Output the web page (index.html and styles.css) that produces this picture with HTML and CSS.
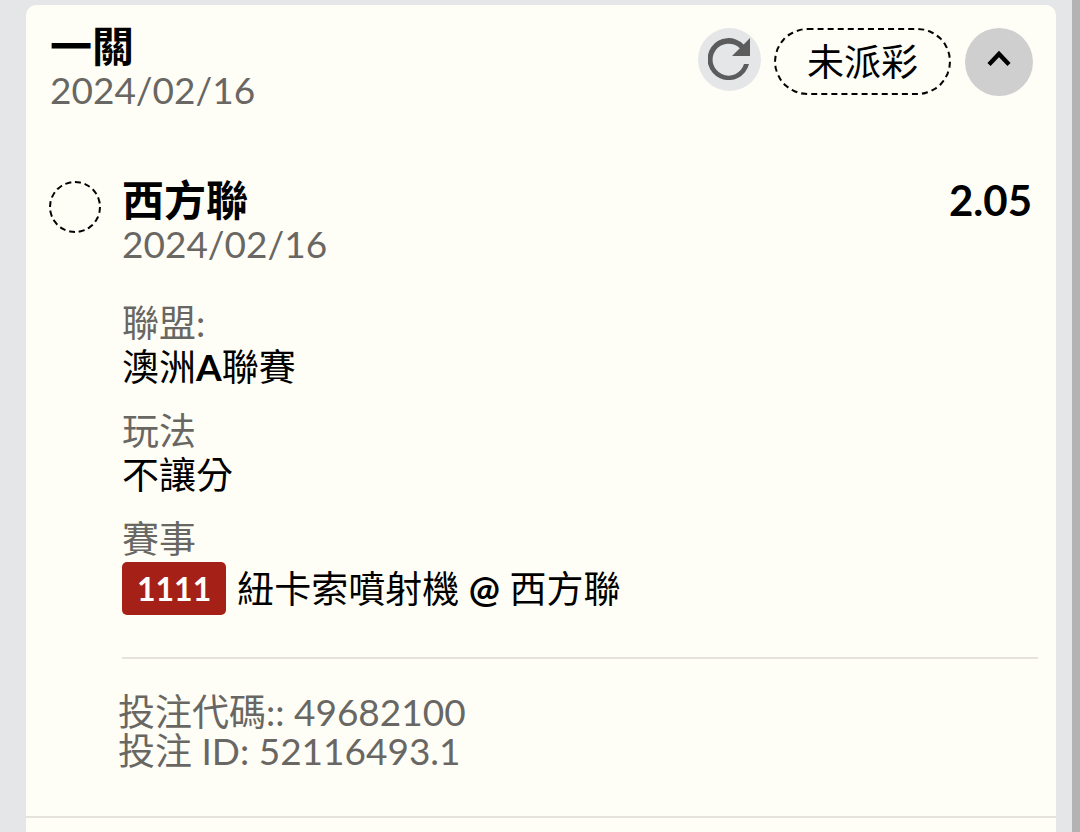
FILE: index.html
```html
<!DOCTYPE html>
<html lang="zh-Hant">
<head>
<meta charset="utf-8">
<meta name="viewport" content="width=device-width, initial-scale=1">
<title>一關</title>
<link rel="stylesheet" href="styles.css">
</head>
<body>
<main class="page">
  <article class="card">
    <section class="bet">
      <header class="bet-header">
        <div class="bet-heading">
          <h1 class="title">一關</h1>
          <time class="date" datetime="2024-02-16">2024/02/16</time>
        </div>
        <div class="actions">
          <button class="refresh" type="button" aria-label="重新整理">
            <svg class="refresh-icon" viewBox="0 0 42 42" aria-hidden="true">
              <path d="M35.6 6.4 42 0V18H24l7.8-7.8A16 16 0 1 0 36 26h5A21 21 0 1 1 35.6 6.4Z" fill="#5c5c5c"/>
            </svg>
          </button>
          <span class="status">未派彩</span>
          <button class="toggle" type="button" aria-label="收合" aria-expanded="true">
            <svg class="toggle-icon" viewBox="0 0 26 18" aria-hidden="true">
              <path d="M3 14.5 13 4l10 10.5" fill="none" stroke="#000" stroke-width="4.4"/>
            </svg>
          </button>
        </div>
      </header>

      <div class="leg">
        <span class="leg-mark"></span>
        <div class="leg-body">
          <div class="leg-header">
            <div class="leg-heading">
              <h2 class="title">西方聯</h2>
              <time class="date" datetime="2024-02-16">2024/02/16</time>
            </div>
            <span class="odds">2.05</span>
          </div>
          <dl class="details">
            <div class="detail">
              <dt>聯盟:</dt>
              <dd>澳洲<b>A</b>聯賽</dd>
            </div>
            <div class="detail">
              <dt>玩法</dt>
              <dd>不讓分</dd>
            </div>
            <div class="detail">
              <dt>賽事</dt>
              <dd class="match"><span class="code">1111</span><span>紐卡索噴射機 <b>@</b> 西方聯</span></dd>
            </div>
          </dl>
        </div>
      </div>

      <footer class="reference">
        <p>投注代碼:: 49682100</p>
        <p>投注 ID: 52116493.1</p>
      </footer>
    </section>
  </article>
</main>
</body>
</html>
```
FILE: styles.css
```css
* {
  box-sizing: border-box;
}

body {
  margin: 0;
  background: #e4e6e8;
  color: #000;
  font-family: Lato, "Noto Sans CJK TC", sans-serif;
  font-size: 37px;
  line-height: 44px;
}

h1, h2, p, dl, dd {
  margin: 0;
}

button {
  padding: 0;
  border: 0;
  border-radius: 50%;
  cursor: pointer;
}

.page {
  display: flex;
  min-height: 100vh;
  padding: 5px 16px 0 26px;
  border-right: 8px solid #b3b3b3;
}

.card {
  flex: 1;
  background: #fffef6;
  border-radius: 10px 10px 0 0;
}

.bet {
  padding: 19px 18px 46px 23px;
  border-bottom: 2px solid #e6e2dc;
}

.bet-header {
  display: flex;
  justify-content: space-between;
  align-items: flex-start;
  padding: 0 5px 0 1px;
}

.title {
  font-size: 42px;
  font-weight: 700;
  line-height: 44px;
}

.date {
  display: block;
  color: #696763;
}

.actions {
  display: flex;
  align-items: flex-start;
  padding-top: 4px;
}

.refresh {
  display: grid;
  place-items: center;
  width: 63px;
  height: 63px;
  padding: 0 1px 1px 0;
  background: #e4e6e8;
}

.refresh-icon {
  width: 42px;
  height: 42px;
}

.status {
  margin: 0 14px 0 13px;
  padding: 0 31px;
  border: 2px dashed #000;
  border-radius: 34px;
  line-height: 63px;
}

.toggle {
  display: grid;
  place-items: center;
  width: 68px;
  height: 68px;
  padding-bottom: 6px;
  background: #cfcfcf;
}

.toggle-icon {
  width: 26px;
  height: 18px;
}

.leg {
  display: flex;
  align-items: flex-start;
  gap: 21px;
  margin-top: 66px;
}

.leg-mark {
  flex: none;
  width: 52px;
  height: 52px;
  margin-top: 3px;
  border: 2px dashed #000;
  border-radius: 50%;
}

.leg-body {
  flex: 1;
  padding-bottom: 42px;
  border-bottom: 2px solid #e6e2dc;
}

.leg-header {
  display: flex;
  justify-content: space-between;
  padding-right: 6px;
}

.odds {
  font-size: 42px;
  font-weight: 700;
}

.details {
  display: grid;
  gap: 20px;
  margin-top: 35px;
}

.detail dt {
  color: #696763;
}

.detail b {
  font-weight: 700;
}

.match {
  display: flex;
  align-items: center;
  gap: 11px;
  margin-top: 1px;
}

.code {
  padding: 0 15px;
  border-radius: 5px;
  background: #a52117;
  color: #fff;
  font-size: 32px;
  font-weight: 700;
  line-height: 53px;
}

.reference {
  margin-top: 33px;
  padding-left: 69px;
  color: #696763;
  line-height: 39px;
}
```
